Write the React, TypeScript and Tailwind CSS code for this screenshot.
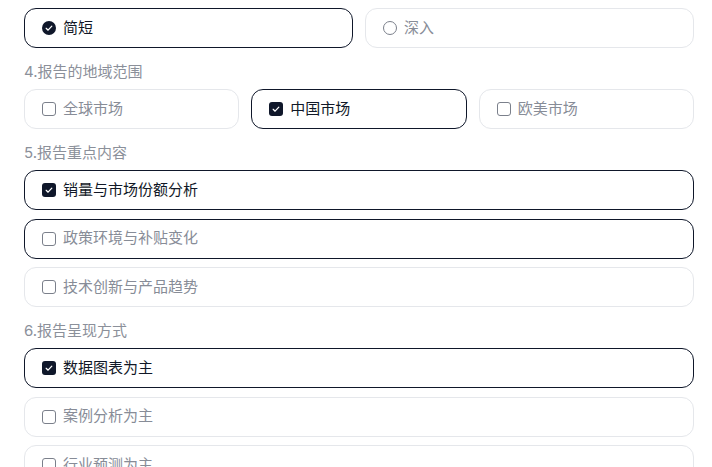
import React from "react";

type Opt = { label: string; checked?: boolean; active?: boolean };

const CheckIcon = () => (
    <svg viewBox="0 0 16 16" className="w-[10px] h-[10px]" fill="none">
        <path d="M3.5 8.5l3 3 6-6.5" stroke="white" strokeWidth="2" strokeLinecap="round" strokeLinejoin="round" />
    </svg>
);

const Box = ({ checked }: { checked?: boolean }) =>
    checked ? (
        <span className="w-[14px] h-[14px] rounded-[3px] bg-[#0f172a] flex items-center justify-center shrink-0">
            <CheckIcon />
        </span>
    ) : (
        <span className="w-[14px] h-[14px] rounded-[3px] border border-[#7b808b] bg-white shrink-0" />
    );

const Radio = ({ checked }: { checked?: boolean }) =>
    checked ? (
        <span className="w-[14px] h-[14px] rounded-full bg-[#0f172a] flex items-center justify-center shrink-0">
            <CheckIcon />
        </span>
    ) : (
        <span className="w-[14px] h-[14px] rounded-full border border-[#7b808b] bg-white shrink-0" />
    );

const Option = ({ opt, radio }: { opt: Opt; radio?: boolean }) => {
    const dark = opt.checked || opt.active;
    return (
        <div
            className={`h-[40px] rounded-xl border flex items-center gap-[7px] pl-[17px] text-[15px] ${
                dark ? "border-[#0f172a]" : "border-[#e5e7eb]"
            } ${opt.checked ? "text-[#111827]" : "text-[#878c97]"}`}
        >
            {radio ? <Radio checked={opt.checked} /> : <Box checked={opt.checked} />}
            <span>{opt.label}</span>
        </div>
    );
};

const Label = ({ children }: { children: React.ReactNode }) => (
    <div className="mt-[14px] mb-[7px] h-[20px] leading-[20px] text-[15px] text-[#8b909a]">{children}</div>
);

export default function App() {
    return (
        <div
            className="w-[712px] h-[467px] overflow-hidden bg-white pl-[24px] pt-[8px] pr-[18px]"
            style={{ fontFamily: 'Inter, "Noto Sans CJK SC", sans-serif' }}
        >
            <div className="grid grid-cols-2 gap-[12px]">
                <Option radio opt={{ label: "简短", checked: true }} />
                <Option radio opt={{ label: "深入" }} />
            </div>

            <Label>4.报告的地域范围</Label>
            <div className="grid grid-cols-3 gap-[12px]">
                <Option opt={{ label: "全球市场" }} />
                <Option opt={{ label: "中国市场", checked: true }} />
                <Option opt={{ label: "欧美市场" }} />
            </div>

            <Label>5.报告重点内容</Label>
            <div className="flex flex-col gap-[8.5px]">
                <Option opt={{ label: "销量与市场份额分析", checked: true }} />
                <Option opt={{ label: "政策环境与补贴变化", active: true }} />
                <Option opt={{ label: "技术创新与产品趋势" }} />
            </div>

            <Label>6.报告呈现方式</Label>
            <div className="flex flex-col gap-[8.5px]">
                <Option opt={{ label: "数据图表为主", checked: true }} />
                <Option opt={{ label: "案例分析为主" }} />
                <Option opt={{ label: "行业预测为主" }} />
            </div>
        </div>
    );
}
